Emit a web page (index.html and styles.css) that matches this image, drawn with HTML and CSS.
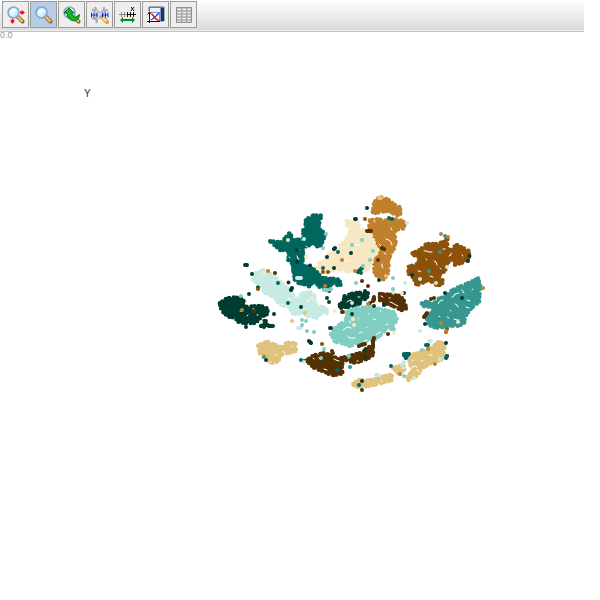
FILE: index.html
```html
<!DOCTYPE html>
<html lang="en">
<head>
<meta charset="utf-8">
<title>Scatter plot</title>
<link rel="stylesheet" href="styles.css">
</head>
<body>
<svg class="defs" aria-hidden="true">
  <defs>
    <linearGradient id="lens" x1="0" y1="0" x2="1" y2="1"><stop offset="0" stop-color="#9fd0f2"/><stop offset=".5" stop-color="#e6faff"/><stop offset="1" stop-color="#7fcdf5"/></linearGradient>
    <symbol id="glass" viewBox="0 0 20 20">
      <path d="M12 12L16.500 16.500" stroke="#7c5a35" stroke-width="4" stroke-linecap="round"/>
      <path d="M12 12L16 16" stroke="#f2bd65" stroke-width="2.500" stroke-linecap="round"/>
      <circle cx="7.500" cy="7.500" r="5.500" fill="url(#lens)" stroke="#7ba6cc" stroke-width="1.500"/>
      <path d="M5 8q0-3 3-3" fill="none" stroke="#fff" stroke-width="1.500"/>
    </symbol>
  </defs>
</svg>
<nav class="toolbar" aria-label="Plot tools">
  <button class="tool" type="button" aria-label="Zoom and pan">
    <svg viewBox="0 0 20 20"><use href="#glass"/><path d="M14 6.500h1.500V5L19 7.500 15.500 10V8.500H14zM5.500 14h2v1.500H9L6.500 19 4 15.500h1.500z" fill="#f00"/></svg>
  </button>
  <button class="tool selected" type="button" aria-label="Zoom" aria-pressed="true">
    <svg viewBox="0 0 20 20"><use href="#glass"/></svg>
  </button>
  <button class="tool" type="button" aria-label="Reset zoom">
    <svg viewBox="0 0 20 20"><use href="#glass"/><path d="M2 8l5-5 5 5H9.500q1 4 4 4.500l4-3q0 5-4 6.500-8 0-8.500-8z" fill="#13b820" stroke="#08720d"/></svg>
  </button>
  <button class="tool" type="button" aria-label="Settings">
    <svg viewBox="0 0 20 20"><path d="M5 5l7 7M15 5L5 15" stroke="#999" stroke-width="3.500"/><path d="M5 5l7 7M15 5L5 15" stroke="#e6e6e6" stroke-width="2"/><path d="M2 4l2 2 2-2-1-2M14 2v4l4-1M2 14l3-1 2 3-1 2" fill="none" stroke="#aaa" stroke-width="2"/><path d="M11.500 11.500l5.500 5.500" stroke="#d9a12c" stroke-width="4" stroke-linecap="round"/><path d="M12 12l4.500 4.500" stroke="#ffe18a" stroke-width="2"/><path d="M1.500 7.500v5M2 10h5M4 7.500v5M7 7.500v5M12.500 7.500v5M13 10h5M15.500 7.500v5M18 7.500v5" stroke="#0030ee"/></svg>
  </button>
  <button class="tool" type="button" aria-label="X axis range">
    <svg viewBox="0 0 20 20"><path d="M1 9.500h11M3.500 7v5M6.500 7v5" stroke="#888"/><path d="M9 9.500h9M9.500 7v5M12.500 7v5M15.500 7v5M13 2l3 4M16 2l-3 4" stroke="#111"/><path d="M2 15l3-3v2h9v-2l3 3-3 3v-2H5v2z" fill="#078c1c"/></svg>
  </button>
  <button class="tool" type="button" aria-label="Save plot">
    <svg viewBox="0 0 20 20"><path d="M3 2h15v14H5V6H3z" fill="#8393bd" stroke="#53679c"/><path d="M4 3h10v4H4z" fill="#eef1f7"/><path d="M16.500 3v13" stroke="#203366" stroke-width="3"/><path d="M3 8h10v9H3z" fill="#fff"/><path d="M3.500 18V7M1 16.500h13M1.500 9.500l2-2.500 2 2.500" stroke="#111" fill="none"/><path d="M5 15l3-2 3-3 2-2" fill="none" stroke="#05f" stroke-width="1.500"/><path d="M6 9l3 4 4 3" fill="none" stroke="#f00" stroke-width="1.500"/></svg>
  </button>
  <button class="tool" type="button" aria-label="Data table">
    <svg viewBox="0 0 20 20"><path d="M2.500 2.500h15v15h-15z" fill="#c9c9c9" stroke="#909090"/><path d="M4 4.500h3M9 4.500h3M14 4.500h2M4 7.500h3M9 7.500h3M14 7.500h2M4 10.500h3M9 10.500h3M14 10.500h2M4 13.500h3M9 13.500h3M14 13.500h2M4 16h3M9 16h3M14 16h2" stroke="#f2f2f2"/><path d="M3 6h14M3 9h14M3 12h14M3 15h14M7.500 3v14M12.500 3v14" stroke="#a4a4a4"/></svg>
  </button>
</nav>
<main>
<svg class="plot" viewBox="0 32 600 568" role="img" aria-label="Clustered scatter plot">
  <text class="origin" x="0" y="38">0.0</text>
  <text class="axis" x="84" y="97">Y</text>

  <!-- Cluster bodies; each group uses thirds of a plot unit. -->
  <g transform="translate(210 190) scale(.333333)">
    <path class="area c8" d="M181 154L215 157 228 142 238 130 243 134 243 145 258 158 262 146 272 152 288 155 298 165 285 170 278 180 280 200 275 225 290 235 300 245 300 290 270 277 262 262 250 240 248 220 235 213 237 190 228 176 213 182 200 170z"/>
  </g>
  <g transform="translate(300 190) scale(.333333)">
    <path class="area c8" d="M40 77L64 77 60 90 55 110 60 120 75 130 70 150 62 165 55 173 45 160 20 160 10 150 10 118 20 110 14 95 25 85z"/>
    <path class="area c8" d="M-5 175L5 178 8 200 0 225 20 230 45 240 65 264 95 267 110 265 125 282 118 286 95 280 85 294 60 292 45 275 25 285 15 275 0 282 -15 270 -20 240z"/>
    <path class="area c3" d="M222 42L228 30 240 22 262 28 275 38 290 50 300 52 302 70 290 77 268 62 240 66 218 70z"/>
    <path class="area c3" d="M210 92L230 88 260 92 285 88 300 90 315 100 310 115 290 118 280 130 288 150 280 180 272 188 268 205 262 210 266 230 262 255 250 268 238 258 225 255 222 225 225 205 240 180 225 160 215 130 208 110z"/>
    <path class="area c5" d="M140 93L155 96 175 98 177 108 160 108 178 120 200 122 215 140 225 170 235 185 215 200 215 220 200 240 185 245 165 238 145 245 130 238 100 238 85 248 65 240 53 234 60 218 80 212 80 194 100 190 112 180 120 167 140 150 145 134 155 115 138 104z"/>
  </g>
  <g transform="translate(390 190) scale(.333333)">
    <path class="area c2" d="M68 190L90 180 110 162 140 162 165 155 172 143 172 162 165 175 182 180 200 165 235 182 238 200 225 215 195 224 195 202 170 220 165 242 145 257 158 272 155 285 140 285 115 268 95 280 80 285 70 262 55 250 57 230 80 223 95 205 78 200z"/>
  </g>
  <g transform="translate(210 280) scale(.333333)">
    <path class="area c6" d="M130 -18L160 -29 188 -15 215 10 240 35 262 60 275 40 300 36 312 45 315 75 350 85 350 100 335 98 320 113 295 108 275 95 265 105 245 98 240 82 210 72 190 50 165 38 150 18 130 0z"/>
    <path class="area c9" d="M30 70L45 58 65 52 90 54 105 67 90 82 120 80 150 78 168 82 175 100 155 110 138 128 110 130 85 125 75 112 55 110 35 92z"/>
    <path class="area c4" d="M145 197L172 185 195 195 215 203 230 188 256 190 258 213 235 219 212 223 205 243 190 250 172 240 150 220z"/>
  </g>
  <g transform="translate(300 280) scale(.333333)">
    <path class="area c9" d="M120 74L132 65 132 50 155 42 175 38 205 40 200 55 180 62 178 75 150 80 135 80 120 84z"/>
    <path class="area c1" d="M240 42L265 44 300 48 310 60 315 70 318 85 305 90 285 80 265 72 250 68 240 60z"/>
    <path class="area c7" d="M143 95L175 83 215 82 250 90 280 97 290 115 283 135 260 143 250 158 225 178 180 185 150 198 130 190 105 185 92 160 105 145 125 130 138 122z"/>
    <path class="area c1" d="M20 242L40 227 70 220 100 227 110 238 160 225 190 217 205 200 220 205 218 225 200 237 165 248 130 238 125 258 127 280 95 286 75 275 45 265 30 252z"/>
    <path class="area c4" d="M160 312L175 300 200 302 225 298 250 290 275 284 277 300 240 310 205 318 180 320 165 320z"/>
  </g>
  <g transform="translate(390 280) scale(.333333)">
    <path class="area c8m" d="M264 -4L270 15 267 65 240 88 225 110 222 130 200 138 175 136 150 144 125 140 110 125 112 110 130 95 125 80 100 78 95 70 110 65 130 73 145 57 170 48 180 35 205 22 225 14z"/>
    <path class="area c4" d="M145 187L163 190 163 210 155 238 125 248 95 265 80 288 55 300 52 290 70 270 57 247 65 225 90 217 125 205z"/>
    <path class="area c4" d="M10 264L38 255 46 266 25 280z"/>
  </g>

  <!-- Gaps between neighbouring marks. -->
  <g class="gaps">
    <path d="M297 256l1 3 1 0M297 249l2 1M289 257l1 1M306 246l1 1M305 263l2 1M354 245l2-1 2 1 2 0M345 261l3 0M337 249l1 0M370 216h2M374 220l1 2M386 239l3 1 2 2 1 3M382 264l0 3 1 1M379 244l2 2M384 253l2 1M391 228l1 2"/>
    <path d="M424 251l3 0 1 1 4 0M434 261l2 1 1 3M443 249l2 0M418 271l2 0 1 1M449 256l2-1 0-2M430 276l3 1M426 259l1 1M450 247l2 0M462 255l1 1M440 268l1 1"/>
    <path d="M452 297l2-1 1-2 4-1M455 304l2 1 1 2M462 290l2 3M466 307l3 1M472 290l1-1M438 304l2-3 3-1M447 317l2 1M454 319l3 1 2 0M439 316l1 1M467 300l3 1M450 310l1 1"/>
    <path d="M240 311l2 0M247 316l1-1M253 309l1 0M257 315l1 0M264 357h1M275 355h1M283 351l2 2M292 346l1 1M270 362h1"/>
    <path d="M343 330l3-2 1-1 4 1M350 321l0 2M348 337l3 1 4 0M359 333l3-1M366 328l1-1M373 320l3-1M376 335l2-2 3-1M364 341l3-1M358 319l1-1M386 325l2-1M380 311h1M368 314l1 0"/>
    <path d="M347 302l3-2 2 1M358 297h2M390 302l3 1 1 1 4 2M381 296l2 1M389 298h1M319 358l2 1M334 359l2 1 3 1M324 369l3 1M313 358l1 1M348 358h1M357 361h1"/>
    <path d="M402 368l3 0M410 370l2-3 3-1 2 1M421 360l2 1M429 355l3 0M417 370l2 1M412 360l1 1M381 381h1M288 298l3 2M295 297l1 1M308 300l0 2M305 312l2 1M282 304l1 1"/>
  </g>

  <!-- Single marks. -->
  <path class="dots c9" d="M245 265h2M252 274h0M249 294h0M258 287.500h0M288.500 282.500h0M292 288l-1 2M297 250h0M297 262h0M310 265.500h0M334 268h0M327 257h0M351 253h0M334 249l1-1M355 219h1M367 208h0M379 280h0M469.500 256h0M468 261h0M412 275h0M462 298h0M445 293h0M246 327h0M261 326l2-2 1 3 2-3 3 2 4 0M264 321h2M274 314h0M301 307h0M309 341l2 2M329 302h0M327 298h0M329 291h0M352 314h0M374 306h0M384 305h0M330 328h1M362 381h0M365 350h0M365 357h0M266 360h0M404 293h0M365 291h0M404 355l3-1 2 0M447 356h0M446 343h0M425 324h0"/>
  <path class="dots c8" d="M301 360h0M338 252h0M323 268h0M361 273h0M392 219h0M304 361h0M337 370h0M359 385h0M426 345l2 0M404 354l2 4 2-4M447 356l-1 2M391 366h0M278 283h0M288 303h0M362 268l-4 4M389 218h0"/>
  <path class="dots c1" d="M275 273h0M254 311h0M367 231h4M382 248l2 1M378 260h0M362 281h0M368 286h0M342 312l1 0M370 303h0M373 301l1-4 0 3M359 346l2-1 4-1M374 338l-1 3M362 390h0M332 351h0M333 353h0M431 299h0M427 313l-3 4M434 298h0M373 342l0 5M388 334h0"/>
  <path class="dots c2" d="M365 219h0M447 329h0M446 332h0M323 272h0M328 272h0M322 344h0M258 289h0"/>
  <path class="dots c3" d="M268 271h0M242 310h0M441 323h0M446 331h0M483 288h0M428 349h0M435 364h0M400 374h0M325 286h0M355 271h0M368 304h0M441 234h0M342 260h0M448 237h0"/>
  <path class="dots c4" d="M292 321h0M305 313h0M379 198l2 0M386 276h0M391 378h0"/>
  <path class="dots c5" d="M264 273h0M288 240h0M306 257h0M261 322h0M335 311h0M353 319h0M354 325h0M394 333h0M402 293h0M458 322h0M312 298h0M362 264h0"/>
  <path class="dots c6" d="M304 239h0M407 223h0M405 283h0M436 283h0M420 279h0M393 292h0M447 267h0M420 331h0M429 341l2 0M376 375l2 0M404 362l-2 3M298 328h3M301 278h-4M304 362h0M440 359h0M414 378h0M352 303h0"/>
  <path class="dots c7" d="M241 296h0M302 325h0M302 320h0M306 321h0M307 331h0M314 332h0M326 234h0M323 248h0M352 245h0M363 266h0M362 240h0M373 251h0M370 260h0M393 289h0M393 278h0M356 283h0M324 290h4M321 358h0M324 349h0M391 317l2 0M391 329l3 0M422 350h0M404 376h0M331 289h0M349 356h0M392 312h0"/>
  <path class="dots c8m" d="M445 236h0M440 252h0M429 271h0M264 357h0M350 367h0M422 303h0"/>
</svg>
</main>
</body>
</html>
```
FILE: styles.css
```css
body {
  margin: 0;
  background: #fff;
  font-family: "Liberation Sans", sans-serif;
}

.defs {
  position: absolute;
  width: 0;
  height: 0;
}

.toolbar {
  display: flex;
  gap: 1px;
  margin-right: 16px;
  padding: 1px 2px 2px;
  background: linear-gradient(#fff, #dadada);
  border-bottom: 1px solid #c2c2c2;
  box-shadow: inset 0 -1px #eee;
}

.tool {
  display: grid;
  place-items: center;
  box-sizing: border-box;
  width: 27px;
  height: 27px;
  margin-bottom: 1px;
  padding: 0;
  border: 1px solid #9a9a9a;
  border-radius: 0;
  background: #eee;
}

.tool.selected {
  background: #b8cde5;
}

.tool svg {
  display: block;
  width: 20px;
  height: 20px;
}

.plot {
  display: block;
  width: 100%;
  height: auto;
  overflow: visible;
}

.axis {
  font-size: 10px;
  fill: #333;
}

.origin {
  font-size: 9px;
  fill: #999;
}

.area {
  fill: var(--mark);
  stroke: var(--mark);
  stroke-width: 14px;
  stroke-linecap: round;
  stroke-dasharray: 0 9 0 13 0 10 0 15;
}

.dots {
  fill: none;
  stroke: var(--mark);
  stroke-width: 4px;
  stroke-linecap: round;
  stroke-linejoin: round;
}

.gaps {
  fill: none;
  stroke: #fff;
  stroke-width: 1px;
  stroke-linecap: round;
}

.c1 { --mark: #543005; }
.c2 { --mark: #8c510a; }
.c3 { --mark: #bf812d; }
.c4 { --mark: #dfc27d; }
.c5 { --mark: #f6e8c3; }
.c6 { --mark: #c7eae5; }
.c7 { --mark: #80cdc1; }
.c8m { --mark: #35978f; }
.c8 { --mark: #01665e; }
.c9 { --mark: #003c30; }
```
